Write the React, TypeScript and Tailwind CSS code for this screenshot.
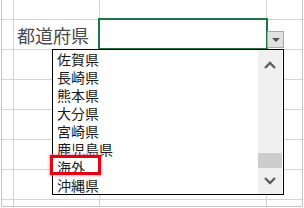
import React from "react";

const cols = ["w-[12px] border-r", "w-[86px] border-r", "w-[167px] border-r", "w-[35px]"];
const rows = ["h-[20px] border-b", "h-[30px] border-b", "h-[30px] border-b", "h-[30px] border-b", "h-[30px] border-b", "h-[30px] border-b", "h-[30px] border-b", "h-[6px]"];

const items = ["佐賀県", "長崎県", "熊本県", "大分県", "宮崎県", "鹿児島県", "海外", "沖縄県"];

const Chevron = ({ up }: { up?: boolean }) => (
  <svg width="12" height="8" viewBox="0 0 12 8">
    <polyline
      points={up ? "1,7 6,2 11,7" : "1,1 6,6 11,1"}
      fill="none"
      stroke="#606060"
      strokeWidth="2.4"
    />
  </svg>
);

export default function App() {
  return (
    <div className="relative w-[304px] h-[208px] bg-white overflow-hidden" style={{ fontFamily: '"Noto Sans CJK JP", "Noto Sans", sans-serif' }}>
      {/* sheet grid */}
      <div className="ml-[1px] w-[302px] h-[207px] border-l border-r border-b border-[#c6c6c6] flex flex-col">
        {rows.map((r, ri) => (
          <div key={ri} className={`flex ${r} border-[#d4d4d4] shrink-0`}>
            {cols.map((c, ci) => (
              <div key={ci} className={`${c} border-[#d4d4d4] h-full flex items-center`}>
                {ri === 1 && ci === 1 && (
                  <span className="pl-[3px] text-[18px] leading-[20px] text-[#4a4a4a] whitespace-nowrap">都道府県</span>
                )}
              </div>
            ))}
          </div>
        ))}
      </div>

      {/* active cell */}
      <div className="absolute left-[98px] top-[18px] w-[170px] h-[32px] border-2 border-[#217346]" />

      {/* dropdown button */}
      <div className="absolute left-[267px] top-[31px] w-[17px] h-[17px] bg-[#e1e1e1] border border-[#a8a8a8] flex items-center justify-center">
        <div className="w-0 h-0 border-l-[4px] border-r-[4px] border-t-[4px] border-l-transparent border-r-transparent border-t-[#555555]" />
      </div>

      {/* list */}
      <div className="absolute left-[52px] top-[49px] w-[232px] h-[146px] bg-white border border-black flex">
        <div className="flex-1 flex flex-col">
          {items.map((t) => (
            <div key={t} className="h-[18px] leading-[18px] pl-[4px] text-[14px] text-[#1a1a1a] whitespace-nowrap">
              {t}
            </div>
          ))}
        </div>
        <div className="w-[24px] mr-[1px] bg-[#f0f0f0] flex flex-col">
          <div className="h-[30px] flex items-center justify-center">
            <Chevron up />
          </div>
          <div className="flex-1" />
          <div className="h-[15px] bg-[#cdcdcd]" />
          <div className="h-[26px] flex items-center justify-center">
            <Chevron />
          </div>
        </div>
      </div>

      {/* highlight */}
      <div className="absolute left-[50px] top-[155px] w-[51px] h-[20px] border-[3px] border-[#e50012] shadow-[0_0_2px_1px_rgba(255,110,130,0.55)]" />
    </div>
  );
}
